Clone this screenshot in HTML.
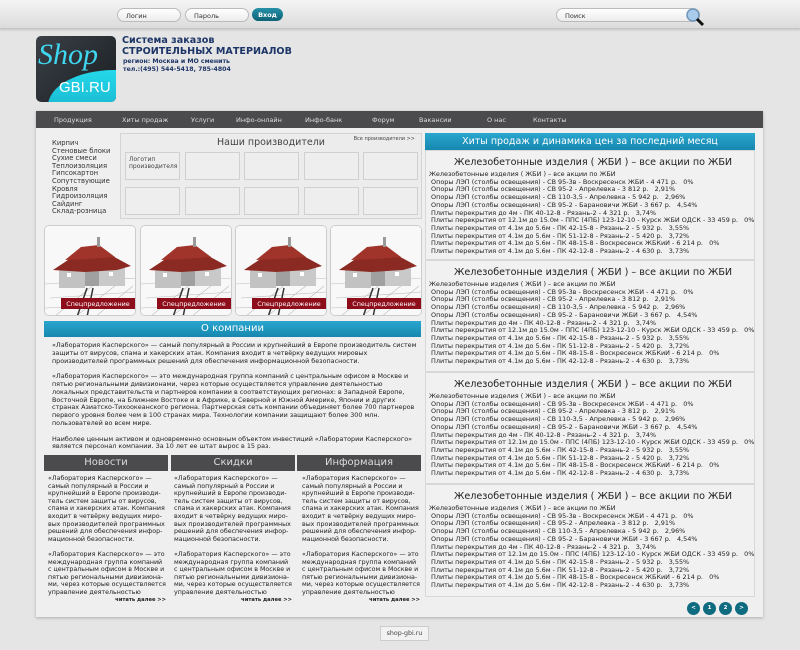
<!DOCTYPE html>
<html><head><meta charset="utf-8">
<style>
*{margin:0;padding:0;box-sizing:border-box}
body{width:800px;height:650px;background:#e5e5e5;font-family:"DejaVu Sans","Liberation Sans",sans-serif;color:#222;position:relative;overflow:hidden}
.abs{position:absolute}
.top{left:0;top:0;width:800px;height:29px;background:linear-gradient(#f4f4f4,#dcdcdc);border-bottom:1px solid #c4c4c4;box-shadow:0 1px 2px rgba(0,0,0,.15)}
.inp{height:14px;border:1px solid #bbb;border-radius:8px;background:linear-gradient(#fff,#ececec);font-size:6.5px;padding:3px 0 0 8px;color:#333}
.btn{background:linear-gradient(#2590a8,#0d6277);color:#fff;border-radius:7px;font-size:6.5px;text-align:center;padding-top:3px;font-weight:bold}
.main{left:36px;top:111px;width:727px;height:506px;background:#efefef;box-shadow:0 1px 3px rgba(0,0,0,.25)}
.nav{left:36px;top:111px;width:727px;height:17px;background:#4b4b4d;color:#ddd;font-size:6.5px}
.nav span{position:absolute;top:5px}
.cats{left:52px;top:140px;font-size:6.8px;line-height:7.6px;color:#333}
.prod{left:120px;top:133px;width:302px;height:86px;border:1px solid #d4d4d4;background:#ececec}
.pb{position:absolute;width:55px;height:28px;border:1px solid #d0d0d0;background:#eee}
.card{top:225px;width:92px;height:91px;border:1px solid #ccc;border-radius:5px;background:#fff;overflow:hidden}
.sp{position:absolute;right:0;bottom:6px;width:74px;height:11px;background:#8d0d1a;color:#fff;font-size:6.4px;text-align:center;padding-top:2px}
.tbar{background:linear-gradient(#2aa6cf,#1687ae);color:#fff;text-align:center}
.txt{font-size:6.4px;line-height:7.8px;color:#222}
.hdr{top:455px;height:16px;background:#4b4b4d;color:#ddd;font-size:10px;text-align:center;padding-top:2px}
.col{top:475px;width:118px;font-size:6.3px;line-height:7.6px}
.rm{font-weight:bold;font-size:5.2px;text-align:right}
.blk{left:425px;width:330px;background:#f1f1f1;border:1px solid #d8d8d8;padding:6px 0 0 3px}
.blk h3{font-weight:normal;font-size:9.6px;padding-left:25px;height:14px;color:#222}
.blk .l{font-size:6.45px;line-height:7.7px;white-space:nowrap}
.pg{top:602px;width:13px;height:13px;border-radius:50%;background:#0e6b80;color:#fff;font-size:5.5px;text-align:center;line-height:13px;font-weight:bold}
</style></head><body>
<div class="abs top"></div>
<div class="abs inp" style="left:117px;top:8px;width:64px">Логин</div>
<div class="abs inp" style="left:185px;top:8px;width:64px">Пароль</div>
<div class="abs btn" style="left:252px;top:8px;width:31px;height:13px">Вход</div>
<div class="abs inp" style="left:556px;top:8px;width:144px">Поиск</div>
<svg class="abs" style="left:684px;top:7px" width="24" height="20"><circle cx="9" cy="8" r="6" fill="#aaccec" stroke="#6f95b8" stroke-width="1.5"/><line x1="13" y1="12" x2="19" y2="18" stroke="#111" stroke-width="3"/></svg>

<div class="abs" style="left:36px;top:36px;width:80px;height:66px;border-radius:5px;background:linear-gradient(135deg,#3a4046,#1a1e22);overflow:hidden">
<div class="abs" style="left:12px;top:34px;width:110px;height:60px;border-radius:60% 0 0 0;background:linear-gradient(#25d8ea,#12a8c4)"></div>
<div class="abs" style="left:2px;top:2px;font-family:'Liberation Serif',serif;font-style:italic;font-size:30px;color:#3fd6f0">Shop</div>
<div class="abs" style="left:23px;top:43px;font-family:'Liberation Sans',sans-serif;font-size:15px;color:#fff">GBI.RU</div>
</div>
<div class="abs" style="left:122px;top:36px;color:#1d3567;font-weight:bold;font-size:9.6px;line-height:10.5px">Система заказов<br>СТРОИТЕЛЬНЫХ МАТЕРИАЛОВ</div>
<div class="abs" style="left:123px;top:58px;color:#1d3567;font-size:6.2px;line-height:8px;font-weight:bold">регион: Москва и МО сменить<br>тел.:(495) 544-5418, 785-4804</div>

<div class="abs main"></div>
<div class="abs nav"><span style="left:18px">Продукция</span><span style="left:86px">Хиты продаж</span><span style="left:155px">Услуги</span><span style="left:200px">Инфо-онлайн</span><span style="left:269px">Инфо-банк</span><span style="left:336px">Форум</span><span style="left:383px">Вакансии</span><span style="left:451px">О нас</span><span style="left:497px">Контакты</span></div>

<div class="abs cats">Кирпич<br>Стеновые блоки<br>Сухие смеси<br>Теплоизоляция<br>Гипсокартон<br>Сопутствующие<br>Кровля<br>Гидроизоляция<br>Сайдинг<br>Склад-розница</div>

<div class="abs prod">
<div class="abs" style="left:0;width:300px;top:3px;text-align:center;font-size:9.5px;color:#444">Наши производители</div>
<div class="abs" style="right:6px;top:2px;font-size:5px;color:#444">Все производители &gt;&gt;</div>
<div class="pb" style="left:4px;top:18px;font-size:6px;padding:3px;color:#444">Логотип производителя</div>
<div class="pb" style="left:64px;top:18px"></div><div class="pb" style="left:123px;top:18px"></div><div class="pb" style="left:183px;top:18px"></div><div class="pb" style="left:242px;top:18px"></div>
<div class="pb" style="left:4px;top:53px"></div><div class="pb" style="left:64px;top:53px"></div><div class="pb" style="left:123px;top:53px"></div><div class="pb" style="left:183px;top:53px"></div><div class="pb" style="left:242px;top:53px"></div>
</div>

<svg width="0" height="0" style="position:absolute"><defs><g id="h">
<rect width="92" height="91" fill="#f8f8f8"/>
<path d="M0 58 L92 52 M10 90 L60 50 M30 91 L75 56 M5 72 L90 66 M0 82 L92 78 M50 91 L88 60" stroke="#bbb" stroke-width=".6"/>
<path d="M42 62 L32 91 M48 62 L42 91" stroke="#333" stroke-width="1.5"/>
<rect x="24" y="38" width="52" height="22" fill="#a0a0a0"/>
<rect x="14" y="42" width="26" height="20" fill="#c2c2c2"/>
<rect x="54" y="42" width="26" height="18" fill="#c9c9c9"/>
<rect x="22" y="47" width="4" height="4" fill="#fff"/><rect x="64" y="46" width="4" height="4" fill="#fff"/>
<path d="M8 44 L26 32 L44 29 L62 27 L86 40 L72 44 L40 46 Z" fill="#8a2a22"/>
<path d="M20 34 L36 21 L54 19 L70 31 L44 33 Z" fill="#a0342a"/>
<rect x="52" y="11" width="3" height="10" fill="#999"/>
</g></defs></svg>
<div class="abs card" style="left:44px"><svg width="92" height="91"><use href="#h"/></svg><div class="sp">Спецпредложение</div></div>
<div class="abs card" style="left:140px"><svg width="92" height="91"><use href="#h"/></svg><div class="sp">Спецпредложение</div></div>
<div class="abs card" style="left:235px"><svg width="92" height="91"><use href="#h"/></svg><div class="sp">Спецпредложение</div></div>
<div class="abs card" style="left:330px"><svg width="92" height="91"><use href="#h"/></svg><div class="sp">Спецпредложение</div></div>

<div class="abs tbar" style="left:44px;top:321px;width:377px;height:16px;font-size:10px;padding-top:2px">О компании</div>
<div class="abs txt" style="left:52px;top:342px;width:365px">«Лаборатория Касперского» — самый популярный в России и крупнейший в Европе производитель систем защиты от вирусов, спама и хакерских атак. Компания входит в четвёрку ведущих мировых производителей программных решений для обеспечения информационной безопасности.<br><br>«Лаборатория Касперского» — это международная группа компаний с центральным офисом в Москве и пятью региональными дивизионами, через которые осуществляется управление деятельностью локальных представительств и партнеров компании в соответствующих регионах: в Западной Европе, Восточной Европе, на Ближнем Востоке и в Африке, в Северной и Южной Америке, Японии и других странах Азиатско-Тихоокеанского региона. Партнерская сеть компании объединяет более 700 партнеров первого уровня более чем в 100 странах мира. Технологии компании защищают более 300 млн. пользователей во всем мире.<br><br>Наиболее ценным активом и одновременно основным объектом инвестиций «Лаборатории Касперского» является персонал компании. За 10 лет ее штат вырос в 15 раз.</div>

<div class="abs hdr" style="left:44px;width:124px">Новости</div>
<div class="abs hdr" style="left:171px;width:124px">Скидки</div>
<div class="abs hdr" style="left:297px;width:124px">Информация</div>
<div class="abs col" style="left:48px">«Лаборатория Касперского» — самый популярный в России и крупнейший в Европе производи-тель систем защиты от вирусов, спама и хакерских атак. Компания входит в четвёрку ведущих миро-вых производителей программных решений для обеспечения инфор-мационной безопасности.<br><br>«Лаборатория Касперского» — это международная группа компаний с центральным офисом в Москве и пятью региональными дивизиона-ми, через которые осуществляется управление деятельностью<div class="rm">читать далее &gt;&gt;</div></div>
<div class="abs col" style="left:174px">«Лаборатория Касперского» — самый популярный в России и крупнейший в Европе производи-тель систем защиты от вирусов, спама и хакерских атак. Компания входит в четвёрку ведущих миро-вых производителей программных решений для обеспечения инфор-мационной безопасности.<br><br>«Лаборатория Касперского» — это международная группа компаний с центральным офисом в Москве и пятью региональными дивизиона-ми, через которые осуществляется управление деятельностью<div class="rm">читать далее &gt;&gt;</div></div>
<div class="abs col" style="left:302px">«Лаборатория Касперского» — самый популярный в России и крупнейший в Европе производи-тель систем защиты от вирусов, спама и хакерских атак. Компания входит в четвёрку ведущих миро-вых производителей программных решений для обеспечения инфор-мационной безопасности.<br><br>«Лаборатория Касперского» — это международная группа компаний с центральным офисом в Москве и пятью региональными дивизиона-ми, через которые осуществляется управление деятельностью<div class="rm">читать далее &gt;&gt;</div></div>

<div class="abs tbar" style="left:425px;top:133px;width:330px;height:17px;font-size:9.5px;padding-top:3px">Хиты продаж и динамика цен за последний месяц</div>

<div class="abs blk" style="top:150px;height:110px">
<h3>Железобетонные изделия ( ЖБИ ) – все акции по ЖБИ</h3>
<div class="l">Железобетонные изделия ( ЖБИ ) – все акции по ЖБИ<br>&nbsp;Опоры ЛЭП (столбы освещения) - СВ 95-3в - Воскресенск ЖБИ - 4 471 р. &nbsp;&nbsp;0%<br>&nbsp;Опоры ЛЭП (столбы освещения) - СВ 95-2 - Апрелевка - 3 812 р. &nbsp;&nbsp;2,91%<br>&nbsp;Опоры ЛЭП (столбы освещения) - СВ 110-3,5 - Апрелевка - 5 942 р. &nbsp;&nbsp;2,96%<br>&nbsp;Опоры ЛЭП (столбы освещения) - СВ 95-2 - Барановичи ЖБИ - 3 667 р. &nbsp;&nbsp;4,54%<br>&nbsp;Плиты перекрытия до 4м - ПК 40-12-8 - Рязань-2 - 4 321 р. &nbsp;&nbsp;3,74%<br>&nbsp;Плиты перекрытия от 12.1м до 15.0м - ППС (4ПБ) 123-12-10 - Курск ЖБИ ОДСК - 33 459 р. &nbsp;&nbsp;0%<br>&nbsp;Плиты перекрытия от 4.1м до 5.6м - ПК 42-15-8 - Рязань-2 - 5 932 р. &nbsp;&nbsp;3,55%<br>&nbsp;Плиты перекрытия от 4.1м до 5.6м - ПК 51-12-8 - Рязань-2 - 5 420 р. &nbsp;&nbsp;3,72%<br>&nbsp;Плиты перекрытия от 4.1м до 5.6м - ПК 48-15-8 - Воскресенск ЖБКиИ - 6 214 р. &nbsp;&nbsp;0%<br>&nbsp;Плиты перекрытия от 4.1м до 5.6м - ПК 42-12-8 - Рязань-2 - 4 630 р. &nbsp;&nbsp;3,73%</div></div>
<div class="abs blk" style="top:260px;height:112px">
<h3>Железобетонные изделия ( ЖБИ ) – все акции по ЖБИ</h3>
<div class="l">Железобетонные изделия ( ЖБИ ) – все акции по ЖБИ<br>&nbsp;Опоры ЛЭП (столбы освещения) - СВ 95-3в - Воскресенск ЖБИ - 4 471 р. &nbsp;&nbsp;0%<br>&nbsp;Опоры ЛЭП (столбы освещения) - СВ 95-2 - Апрелевка - 3 812 р. &nbsp;&nbsp;2,91%<br>&nbsp;Опоры ЛЭП (столбы освещения) - СВ 110-3,5 - Апрелевка - 5 942 р. &nbsp;&nbsp;2,96%<br>&nbsp;Опоры ЛЭП (столбы освещения) - СВ 95-2 - Барановичи ЖБИ - 3 667 р. &nbsp;&nbsp;4,54%<br>&nbsp;Плиты перекрытия до 4м - ПК 40-12-8 - Рязань-2 - 4 321 р. &nbsp;&nbsp;3,74%<br>&nbsp;Плиты перекрытия от 12.1м до 15.0м - ППС (4ПБ) 123-12-10 - Курск ЖБИ ОДСК - 33 459 р. &nbsp;&nbsp;0%<br>&nbsp;Плиты перекрытия от 4.1м до 5.6м - ПК 42-15-8 - Рязань-2 - 5 932 р. &nbsp;&nbsp;3,55%<br>&nbsp;Плиты перекрытия от 4.1м до 5.6м - ПК 51-12-8 - Рязань-2 - 5 420 р. &nbsp;&nbsp;3,72%<br>&nbsp;Плиты перекрытия от 4.1м до 5.6м - ПК 48-15-8 - Воскресенск ЖБКиИ - 6 214 р. &nbsp;&nbsp;0%<br>&nbsp;Плиты перекрытия от 4.1м до 5.6м - ПК 42-12-8 - Рязань-2 - 4 630 р. &nbsp;&nbsp;3,73%</div></div>
<div class="abs blk" style="top:372px;height:112px">
<h3>Железобетонные изделия ( ЖБИ ) – все акции по ЖБИ</h3>
<div class="l">Железобетонные изделия ( ЖБИ ) – все акции по ЖБИ<br>&nbsp;Опоры ЛЭП (столбы освещения) - СВ 95-3в - Воскресенск ЖБИ - 4 471 р. &nbsp;&nbsp;0%<br>&nbsp;Опоры ЛЭП (столбы освещения) - СВ 95-2 - Апрелевка - 3 812 р. &nbsp;&nbsp;2,91%<br>&nbsp;Опоры ЛЭП (столбы освещения) - СВ 110-3,5 - Апрелевка - 5 942 р. &nbsp;&nbsp;2,96%<br>&nbsp;Опоры ЛЭП (столбы освещения) - СВ 95-2 - Барановичи ЖБИ - 3 667 р. &nbsp;&nbsp;4,54%<br>&nbsp;Плиты перекрытия до 4м - ПК 40-12-8 - Рязань-2 - 4 321 р. &nbsp;&nbsp;3,74%<br>&nbsp;Плиты перекрытия от 12.1м до 15.0м - ППС (4ПБ) 123-12-10 - Курск ЖБИ ОДСК - 33 459 р. &nbsp;&nbsp;0%<br>&nbsp;Плиты перекрытия от 4.1м до 5.6м - ПК 42-15-8 - Рязань-2 - 5 932 р. &nbsp;&nbsp;3,55%<br>&nbsp;Плиты перекрытия от 4.1м до 5.6м - ПК 51-12-8 - Рязань-2 - 5 420 р. &nbsp;&nbsp;3,72%<br>&nbsp;Плиты перекрытия от 4.1м до 5.6м - ПК 48-15-8 - Воскресенск ЖБКиИ - 6 214 р. &nbsp;&nbsp;0%<br>&nbsp;Плиты перекрытия от 4.1м до 5.6м - ПК 42-12-8 - Рязань-2 - 4 630 р. &nbsp;&nbsp;3,73%</div></div>
<div class="abs blk" style="top:484px;height:113px">
<h3>Железобетонные изделия ( ЖБИ ) – все акции по ЖБИ</h3>
<div class="l">Железобетонные изделия ( ЖБИ ) – все акции по ЖБИ<br>&nbsp;Опоры ЛЭП (столбы освещения) - СВ 95-3в - Воскресенск ЖБИ - 4 471 р. &nbsp;&nbsp;0%<br>&nbsp;Опоры ЛЭП (столбы освещения) - СВ 95-2 - Апрелевка - 3 812 р. &nbsp;&nbsp;2,91%<br>&nbsp;Опоры ЛЭП (столбы освещения) - СВ 110-3,5 - Апрелевка - 5 942 р. &nbsp;&nbsp;2,96%<br>&nbsp;Опоры ЛЭП (столбы освещения) - СВ 95-2 - Барановичи ЖБИ - 3 667 р. &nbsp;&nbsp;4,54%<br>&nbsp;Плиты перекрытия до 4м - ПК 40-12-8 - Рязань-2 - 4 321 р. &nbsp;&nbsp;3,74%<br>&nbsp;Плиты перекрытия от 12.1м до 15.0м - ППС (4ПБ) 123-12-10 - Курск ЖБИ ОДСК - 33 459 р. &nbsp;&nbsp;0%<br>&nbsp;Плиты перекрытия от 4.1м до 5.6м - ПК 42-15-8 - Рязань-2 - 5 932 р. &nbsp;&nbsp;3,55%<br>&nbsp;Плиты перекрытия от 4.1м до 5.6м - ПК 51-12-8 - Рязань-2 - 5 420 р. &nbsp;&nbsp;3,72%<br>&nbsp;Плиты перекрытия от 4.1м до 5.6м - ПК 48-15-8 - Воскресенск ЖБКиИ - 6 214 р. &nbsp;&nbsp;0%<br>&nbsp;Плиты перекрытия от 4.1м до 5.6м - ПК 42-12-8 - Рязань-2 - 4 630 р. &nbsp;&nbsp;3,73%</div></div>

<div class="abs pg" style="left:687px">&lt;</div>
<div class="abs pg" style="left:703px">1</div>
<div class="abs pg" style="left:719px">2</div>
<div class="abs pg" style="left:735px">&gt;</div>

<div class="abs" style="left:380px;top:626px;width:49px;height:15px;background:#f2f2f2;border:1px solid #ccc;font-size:6.3px;text-align:center;padding-top:3px;color:#444">shop-gbi.ru</div>
</body></html>
